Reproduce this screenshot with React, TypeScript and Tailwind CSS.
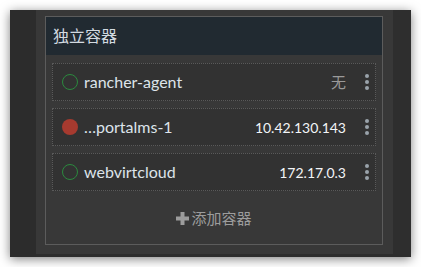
import React from "react";

const rows = [
    {name: "rancher-agent", ip: "无", running: false, muted: true},
    {name: "…portalms-1", ip: "10.42.130.143", running: true, muted: false},
    {name: "webvirtcloud", ip: "172.17.0.3", running: false, muted: false},
];

function Kebab() {
    return (
        <div className="flex w-[16px] flex-col items-center gap-[2px]">
            <span className="block h-[4px] w-[4px] rounded-full bg-[#9aa3ab]"/>
            <span className="block h-[4px] w-[4px] rounded-full bg-[#9aa3ab]"/>
            <span className="block h-[4px] w-[4px] rounded-full bg-[#9aa3ab]"/>
        </div>
    );
}

export default function App() {
    return (
        <div className="h-[267px] w-[421px] bg-white pl-[10px] pt-[10px]"
             style={{fontFamily: "Lato, 'Noto Sans CJK SC', sans-serif"}}>
            <div className="flex h-[247px] w-[401px] bg-[#2d2d2d] shadow-[0_2px_10px_rgba(0,0,0,0.5)]">
                <div className="w-[26px] bg-[#2c2c2c]"/>
                <div className="mb-[3px] w-[357px] bg-[#383838] pl-[9px] pr-[10px] pt-[6px]">
                    <div className="flex h-[229px] flex-col border border-[#5c5c5c] bg-[#383838]">
                        <div className="flex h-[38px] items-center bg-[#212a31] pl-[7px] text-[16px] text-[#d3dae0]">
                            独立容器
                        </div>
                        <div className="flex flex-col gap-[7px] px-[6px] pt-[8px]">
                            {rows.map((r) => (
                                <div key={r.name}
                                     className="flex h-[38px] items-center border border-dotted border-[#5a5a5a] bg-[#323232] pl-[9px]">
                                    {r.running ? (
                                        <span className="block h-[16px] w-[16px] rounded-full bg-[#a63a2f]"/>
                                    ) : (
                                        <span className="block h-[16px] w-[16px] rounded-full border-[1.5px] border-[#2b8a3e]"/>
                                    )}
                                    <span className="ml-[6px] flex-1 text-[16px] text-[#dde4ea]">{r.name}</span>
                                    <span className={r.muted ? "text-[15px] text-[#9a9a9a]" : "text-[14px] text-[#f2f5f8]"}>
                                        {r.ip}
                                    </span>
                                    <div className="ml-[13px]">
                                        <Kebab/>
                                    </div>
                                </div>
                            ))}
                        </div>
                        <div className="mt-[16px] flex items-center justify-center text-[15px] text-[#9c9c9c]">
                            <svg width="13" height="13" viewBox="0 0 13 13" className="mr-[2px]">
                                <rect x="4.5" y="0" width="4" height="13" fill="#9c9c9c"/>
                                <rect x="0" y="4.5" width="13" height="4" fill="#9c9c9c"/>
                            </svg>
                            添加容器
                        </div>
                    </div>
                </div>
                <div className="mb-[3px] w-[18px] bg-[#2e2e2e]"/>
            </div>
        </div>
    );
}
